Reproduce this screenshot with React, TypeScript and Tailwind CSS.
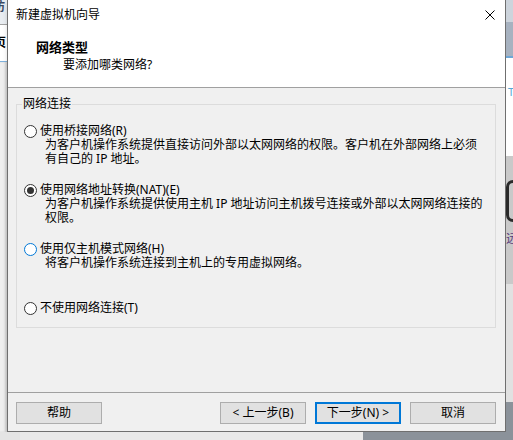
import type { ReactNode } from 'react';

const FONT = '"Noto Sans", "Noto Sans CJK SC", sans-serif';

function Radio({ checked = false, hover = false }: { checked?: boolean; hover?: boolean }) {
  return (
    <span
      className={`flex h-[13px] w-[13px] shrink-0 items-center justify-center rounded-full border bg-white ${
        hover ? 'border-[#0078d7]' : 'border-[#333333]'
      }`}
    >
      {checked && <span className="h-[7px] w-[7px] rounded-full bg-[#333333]" />}
    </span>
  );
}

interface OptionProps {
  label: ReactNode;
  lines: string[];
  checked?: boolean;
  hover?: boolean;
}

function NetOption({ label, lines, checked, hover }: OptionProps) {
  return (
    <div className="flex h-[59px] flex-col">
      <div className="flex h-[14px] items-center pl-[7px]">
        <Radio checked={checked} hover={hover} />
        <span className="ml-[3px] whitespace-nowrap leading-[14px]">{label}</span>
      </div>
      {lines.map((line) => (
        <div key={line} className="h-[14px] whitespace-nowrap pl-[28px] leading-[14px]">
          {line}
        </div>
      ))}
    </div>
  );
}

function WizardButton({ children, primary = false }: { children: ReactNode; primary?: boolean }) {
  return (
    <button
      type="button"
      className={`flex h-[22px] w-[86px] items-center justify-center bg-[#e1e1e1] text-[12px] text-black ${
        primary ? 'border-2 border-[#0078d7]' : 'border border-[#adadad]'
      }`}
    >
      {children}
    </button>
  );
}

function LeftStrip() {
  return (
    <div className="flex w-[7px] shrink-0 flex-col overflow-hidden">
      <div className="h-[24px] bg-[#e9edf1]">
        <span className="-ml-[7px] block text-[12px] font-bold leading-[14px] text-[#3b4a63]">访</span>
      </div>
      <div className="h-px bg-[#a3a3a3]" />
      <div className="flex h-[36px] items-center bg-white">
        <span className="-ml-[6px] block text-[12px] font-bold leading-[14px]">页</span>
      </div>
      <div className="h-px bg-[#7fb1dc]" />
      <div className="flex-1 bg-[#efefef] shadow-[inset_-2px_0_2px_rgba(0,0,0,0.12)]" />
    </div>
  );
}

function RightStrip() {
  return (
    <div className="flex w-[7px] shrink-0 flex-col overflow-hidden">
      <div className="h-[22px] bg-[#cdd4dc]" />
      <div className="h-[34px] bg-[#a7b2c0]" />
      <div className="h-[2px] bg-[#6ea6d6]" />
      <div className="h-[98px] bg-white pl-[2px] pt-[28px] text-[11px] leading-[12px] text-[#58a7d6]">T</div>
      <div className="flex h-[128px] flex-col bg-[#c9c9c9]">
        <div className="mt-[24px] h-[42px] w-[14px] rounded-full border-[3px] border-[#2a2a2a]" />
        <span className="mt-[10px] text-[12px] leading-[14px] text-[#5b3d7a]">远</span>
      </div>
      <div className="flex-1 bg-[#e1e1e1]" />
      <div className="h-[30px] bg-[#8b929a]" />
    </div>
  );
}

export default function App() {
  return (
    <div
      className="flex h-[440px] w-[513px] flex-col overflow-hidden bg-[#9ea4aa] text-[12px] text-black"
      style={{ fontFamily: FONT }}
    >
      <div className="flex h-[432px]">
        <LeftStrip />
        <div className="flex w-[499px] shrink-0 flex-col border-x border-b border-[#6f6f6f] bg-[#f0f0f0] shadow-[2px_2px_6px_rgba(0,0,0,0.3)]">
          {/* title bar + header */}
          <div className="flex h-[88px] flex-col border-b border-[#a0a0a0] bg-white">
            <div className="flex h-[30px] items-center justify-between pl-[8px] pr-[10px]">
              <span className="leading-[16px]">新建虚拟机向导</span>
              <svg width="10" height="10" viewBox="0 0 10 10" className="block">
                <path d="M0.5 0.5L9.5 9.5M9.5 0.5L0.5 9.5" stroke="#000" strokeWidth="1" />
              </svg>
            </div>
            <div className="mt-[9px] h-[16px] pl-[28px] text-[13px] font-bold leading-[16px]">网络类型</div>
            <div className="mt-[2px] h-[16px] pl-[55px] leading-[16px]">要添加哪类网络?</div>
          </div>

          {/* body */}
          <div className="flex flex-1 flex-col">
            <fieldset className="ml-[8px] mr-[9px] mt-[8px] h-[232px] border border-[#dcdcdc] p-0 pt-[12px]">
              <legend className="ml-[5px] px-[1px] leading-[16px]">网络连接</legend>
              <NetOption
                label="使用桥接网络(R)"
                lines={[
                  '为客户机操作系统提供直接访问外部以太网网络的权限。客户机在外部网络上必须',
                  '有自己的 IP 地址。',
                ]}
              />
              <NetOption
                checked
                label="使用网络地址转换(NAT)(E)"
                lines={[
                  '为客户机操作系统提供使用主机 IP 地址访问主机拨号连接或外部以太网网络连接的',
                  '权限。',
                ]}
              />
              <NetOption hover label="使用仅主机模式网络(H)" lines={['将客户机操作系统连接到主机上的专用虚拟网络。']} />
              <NetOption label="不使用网络连接(T)" lines={[]} />
            </fieldset>
          </div>

          {/* footer */}
          <div className="flex h-[39px] border-t border-[#a0a0a0] pl-[8px] pr-[9px] pt-[9px]">
            <WizardButton>帮助</WizardButton>
            <div className="flex-1" />
            <div className="flex gap-[9px]">
              <WizardButton>&lt; 上一步(B)</WizardButton>
              <WizardButton primary>下一步(N) &gt;</WizardButton>
              <WizardButton>取消</WizardButton>
            </div>
          </div>
        </div>
        <RightStrip />
      </div>
      <div className="flex h-[8px]">
        <div className="w-[20px] bg-[#e4e4e4]" />
        <div className="flex-1 bg-[#e9e9e9]" />
        <div className="w-[150px] bg-[#8b929a]" />
      </div>
    </div>
  );
}
